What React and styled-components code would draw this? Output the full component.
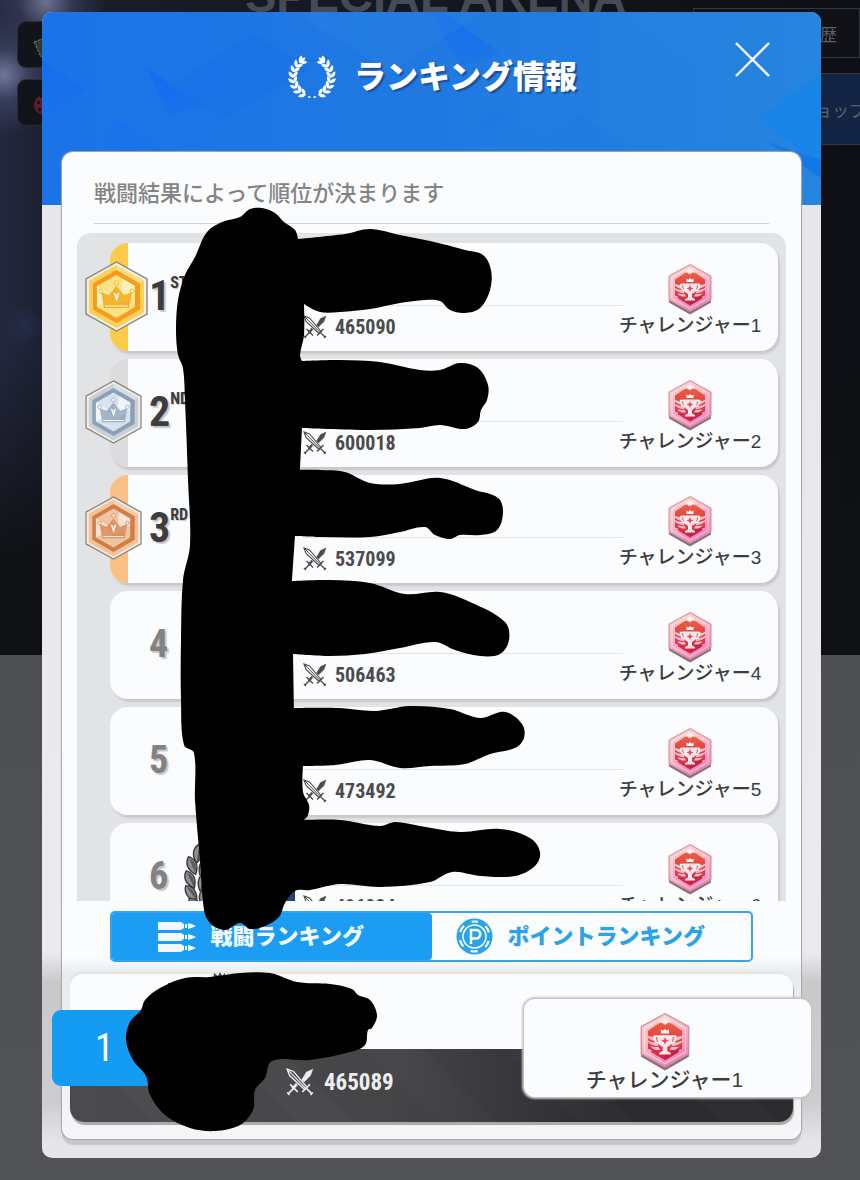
import React, { useState } from "react"
import styled, { createGlobalStyle } from "styled-components"

const GlobalStyle = createGlobalStyle`
  * {
    box-sizing: border-box;
  }
  body {
    margin: 0;
    background: #4b4c4f;
    font-family: "Liberation Sans", "Noto Sans CJK JP", sans-serif;
  }
  h1, p, ol {
    margin: 0;
    padding: 0;
  }
  button {
    border: 0;
    padding: 0;
    background: none;
    font: inherit;
    cursor: pointer;
  }
`

const narrow = `"Liberation Sans Narrow", "Roboto Condensed", "Liberation Sans", sans-serif`

const Page = styled.main`
  position: relative;
  min-height: 100vh;
  padding: 12px 39px 22px 42px;
  overflow: hidden;
  background: linear-gradient(#4a4b4e, #525356);
`

/* dimmed game screen behind the dialog */
const Scene = styled.div`
  position: absolute;
  inset: 0 0 auto;
  height: 655px;
  overflow: hidden;
  background:
    radial-gradient(circle at 4px 75px, #70779a 0, #363c5a 26px, transparent 60px),
    radial-gradient(circle at 46px 2px, #6c7190 0, #30344f 28px, transparent 60px),
    radial-gradient(circle at 24px 325px, #232d49 0, transparent 20px),
    linear-gradient(90deg, #24283f 0, #191d2b 60px, #14171f 50%, #0d0f14 100%);
  &::after {
    content: "";
    position: absolute;
    inset: 350px 0 0;
    background: linear-gradient(transparent, #101115 70%);
  }
`

const SceneTitle = styled.div`
  position: absolute;
  top: -28px;
  left: 245px;
  color: #454a57;
  font-size: 47px;
  line-height: 1;
  font-weight: 700;
  white-space: nowrap;
`

const SceneIcon = styled.div`
  position: absolute;
  left: 17px;
  top: ${({ $top }) => $top}px;
  width: 60px;
  height: 47px;
  border: 1px solid #2a2d38;
  border-radius: 9px;
  background: #12141c;
  svg {
    display: block;
    margin: 8px 0 0 14px;
  }
`

const SceneButton = styled.div`
  position: absolute;
  right: ${({ $right = 0 }) => $right}px;
  top: ${({ $top }) => $top}px;
  width: 167px;
  height: ${({ $height }) => $height}px;
  display: flex;
  align-items: center;
  justify-content: flex-end;
  padding-right: ${({ $pad }) => $pad}px;
  border: 1px solid #33363e;
  background: ${({ $bg }) => $bg};
  color: #5d6069;
  font-size: 17px;
`

const Dialog = styled.section`
  position: relative;
  display: flex;
  flex-direction: column;
  padding: 0 20px 19px;
  border-radius: 10px;
  background: linear-gradient(
    #e6e6e8 0,
    #ebebed 940px,
    #cbc8ca 970px,
    #cfcccf 1090px,
    #e6e5e8 1130px
  );
`

const Pattern = styled.svg`
  position: absolute;
  inset: 0 0 auto;
  width: 100%;
  height: 193px;
  border-radius: 10px 10px 0 0;
`

const Header = styled.header`
  position: relative;
  display: flex;
  align-items: center;
  justify-content: center;
  gap: 18px;
  height: 140px;
  padding: 0 0 10px 2px;
  h1 {
    color: #fff;
    font-size: 32px;
    line-height: 40px;
    font-weight: 900;
    text-shadow: 2px 2px 1px #1d4f9a;
  }
`

const Close = styled.button`
  position: absolute;
  top: 29px;
  right: 30px;
  width: 37px;
  height: 37px;
  svg {
    display: block;
  }
`

const Card = styled.div`
  position: relative;
  display: flex;
  flex-direction: column;
  padding-bottom: 17px;
  border-radius: 11px;
  background: linear-gradient(#fafcfd 0, #fafcfd 805px, #e9ecee 822px, #f4f6f7 100%);
  box-shadow: 0 0 1px 1px #a5a5a8, 0 6px 1px #c9c5c8;
`

const Intro = styled.p`
  margin: 0 32px;
  padding: 26px 0 13px;
  border-bottom: 1px solid #cfd1d2;
  color: #868483;
  font-size: 22px;
  line-height: 32px;
  font-weight: 500;
`

const List = styled.ol`
  display: flex;
  flex-direction: column;
  gap: 8px;
  height: 668px;
  margin: 9px 15px 0;
  padding: 10px 8px 0 33px;
  overflow: hidden;
  list-style: none;
  border-radius: 14px 14px 0 0;
  background: #e2e3e5;
`

const Row = styled.li`
  position: relative;
  flex: none;
  display: grid;
  grid-template-columns: 193px 1fr 155px;
  height: 108px;
  border-radius: 18px;
  background: linear-gradient(90deg, ${({ $strip }) => $strip} 18px, #fafcfd 18px);
  box-shadow: 2px 3px 2px #c9c9cc;
`

const Rank = styled.div`
  display: flex;
  align-items: center;
  height: 106px;
`

const MedalSlot = styled.div`
  flex: none;
  display: flex;
  width: 64px;
  margin-left: -25px;
`

const Place = styled.span`
  color: ${({ $top }) => ($top ? "#3d3d3f" : "#828282")};
  font-family: ${narrow};
  font-size: ${({ $top }) => ($top ? 42 : 38)}px;
  line-height: 48px;
  font-weight: 700;
  text-shadow: 2px 2px 1px #c6c6c8;
`

const Suffix = styled.sup`
  align-self: flex-start;
  padding-top: 30px;
  color: #3d3d3f;
  font-family: ${narrow};
  font-size: 16px;
  line-height: 20px;
  font-weight: 700;
  text-shadow: 1px 1px 1px #c6c6c8;
`

const Wreath = styled.svg`
  position: absolute;
  left: 70px;
  top: 20px;
`

const Info = styled.div`
  display: grid;
  grid-template-rows: 63px 42px;
`

const PlayerName = styled.div`
  border-bottom: 1px solid #e2e4e5;
`

const Score = styled.div`
  display: flex;
  align-items: center;
  gap: ${({ $large }) => ($large ? 10 : 8)}px;
  color: ${({ $large }) => ($large ? "#eeeef0" : "#4b4b4d")};
  font-family: ${narrow};
  font-size: ${({ $large }) => ($large ? 23 : 20)}px;
  font-weight: 700;
`

const Tier = styled.div`
  display: flex;
  flex-direction: column;
  align-items: center;
  padding: 20px 21px 0 0;
  color: #3c3c3e;
  font-size: 19px;
  line-height: 20px;
  font-weight: 500;
  white-space: nowrap;
`

const Tabs = styled.div`
  display: grid;
  grid-template-columns: 1fr 1fr;
  height: 51px;
  margin: 10px 48px 0;
  overflow: hidden;
  border: 2px solid #35a4e9;
  border-radius: 5px;
`

const Tab = styled.button`
  display: flex;
  align-items: center;
  justify-content: center;
  gap: 15px;
  padding-right: 22px;
  border-radius: 0 4px 4px 0;
  background: ${({ $active }) => ($active ? "#1a9df3" : "#fafcfd")};
  color: ${({ $active }) => ($active ? "#f2f8fc" : "#2ba3e8")};
  font-size: 22px;
  line-height: 30px;
  font-weight: 900;
  white-space: nowrap;
`

const Own = styled.section`
  position: relative;
  height: 148px;
  margin: 12px 8px 0;
  padding: 75px 0 0 216px;
  border-radius: 14px;
  background:
    linear-gradient(#fafcfd 75px, transparent 75px),
    repeating-linear-gradient(45deg, transparent 0 60px, #ffffff04 60px 100px),
    linear-gradient(90deg, #4b4b4f 0, #454548 45%, #2c2c2f 75%);
  box-shadow: 1px 3px 1px #a9a9ab, 0 -2px 3px #e2e4e5;
  ${Score} {
    height: 66px;
  }
`

const OwnRank = styled.div`
  position: absolute;
  top: 36px;
  left: -18px;
  display: flex;
  align-items: center;
  justify-content: center;
  width: 105px;
  height: 76px;
  border-radius: 9px 0 0 9px;
  background: #149bf4;
  color: #fff;
  font-family: ${narrow};
  font-size: 38px;
`

const OwnTier = styled(Tier)`
  position: absolute;
  top: 25px;
  right: -18px;
  width: 287px;
  height: 98px;
  padding: 13px 6px 0 0;
  border-radius: 11px;
  background: #fbfcfd;
  box-shadow: 0 0 2px 2px #c6c6c8;
  font-size: 21px;
  line-height: 16px;
`

const Ink = styled.svg`
  position: absolute;
  top: 0;
  left: 0;
  width: 100%;
  height: 100%;
  pointer-events: none;
`

const players = [
  { place: 1, suffix: "ST", score: "465090", medal: "gold", strip: "#fdcb4a" },
  { place: 2, suffix: "ND", score: "600018", medal: "silver", strip: "#dcdcdf" },
  { place: 3, suffix: "RD", score: "537099", medal: "bronze", strip: "#fbc083" },
  { place: 4, score: "506463" },
  { place: 5, score: "473492" },
  { place: 6, score: "496034" },
]

const medals = {
  gold: { outer: "#fbd257", ring: "#f69a20", inner: "#fbe283", crown: "#f5b52f", shine: "#fdf1be" },
  silver: { outer: "#c9d0d8", ring: "#8ba0b5", inner: "#d8e2ec", crown: "#a4b5c8", shine: "#f1f5f9" },
  bronze: { outer: "#f3c19c", ring: "#ce7f45", inner: "#f0c3a2", crown: "#dc9a6c", shine: "#fae3d2" },
}

// a third item marks a sharp corner
const scribbles = [
  [
    [207, 232], [222, 222], [240, 217], [250, 209], [262, 208], [275, 213], [284, 222], [295, 230],
    [298, 239, 1], [345, 234], [370, 229], [400, 235], [430, 241], [465, 250], [483, 255], [491, 270],
    [490, 290], [480, 308], [465, 313], [450, 310], [440, 301], [425, 300], [400, 303], [370, 309],
    [340, 312], [320, 312], [304, 304, 1], [304, 335], [300, 355], [302, 361, 1], [340, 360],
    [380, 362], [420, 370], [440, 370], [460, 363], [478, 368], [488, 385], [487, 400], [481, 410],
    [478, 422], [465, 429], [440, 425], [420, 428], [370, 430], [302, 428, 1], [300, 470, 1],
    [320, 470], [345, 472], [370, 483], [400, 484], [440, 478], [475, 490], [498, 498], [503, 512],
    [497, 530], [480, 535], [460, 535], [450, 539], [435, 535], [425, 527], [400, 532], [370, 537],
    [320, 537], [295, 536, 1], [292, 581, 1], [330, 580], [370, 583], [405, 594], [440, 592],
    [470, 602], [505, 622], [509, 640], [500, 654], [480, 656], [455, 650], [435, 642], [400, 648],
    [365, 654], [330, 656], [293, 654, 1], [294, 708, 1], [340, 708], [375, 711], [410, 706],
    [450, 709], [480, 718], [505, 712], [522, 724], [524, 738], [515, 748], [490, 754], [465, 764],
    [430, 766], [400, 768], [370, 760], [335, 765], [303, 766, 1], [303, 792], [309, 805],
    [308, 815], [304, 820, 1], [340, 820], [380, 826], [395, 822], [420, 826], [460, 832],
    [500, 829], [530, 838], [540, 852], [535, 866], [515, 876], [480, 876], [452, 872], [430, 882],
    [380, 887], [340, 884], [310, 890], [295, 891], [285, 903], [279, 917], [265, 926], [250, 929],
    [240, 923], [225, 930], [210, 923], [204, 910], [200, 860], [195, 800], [194, 753], [184, 745],
    [181, 700], [181, 640], [183, 580], [190, 545], [188, 480], [185, 400], [183, 368], [178, 355],
    [176, 330], [178, 300], [185, 275], [195, 257],
  ],
  [
    [126, 1040], [130, 1022], [141, 1010], [145, 1000], [160, 988], [185, 978], [210, 977],
    [240, 973], [270, 973], [297, 982], [330, 984], [352, 989], [358, 995], [370, 1000], [377, 1015],
    [372, 1028], [368, 1030], [365, 1045], [350, 1052], [310, 1060], [272, 1061], [265, 1078],
    [255, 1090], [253, 1110], [240, 1125], [215, 1131], [190, 1128], [165, 1115], [150, 1095],
    [146, 1076], [133, 1060],
  ],
]

// closed curve through every point
const smooth = (pts) => {
  const n = pts.length
  const at = (i) => pts[(i + n) % n]
  let d = `M${pts[0][0]} ${pts[0][1]}`
  for (let i = 0; i < n; i++) {
    const [a, b, c, e] = [at(i - 1), at(i), at(i + 1), at(i + 2)]
    const len = Math.hypot(c[0] - b[0], c[1] - b[1])
    const t1 = b[2] ? 0 : len / (Math.hypot(c[0] - a[0], c[1] - a[1]) || 1) / 3
    const t2 = c[2] ? 0 : len / (Math.hypot(e[0] - b[0], e[1] - b[1]) || 1) / 3
    d += `C${b[0] + (c[0] - a[0]) * t1} ${b[1] + (c[1] - a[1]) * t1} ${c[0] - (e[0] - b[0]) * t2} ${
      c[1] - (e[1] - b[1]) * t2
    } ${c[0]} ${c[1]}`
  }
  return d + "Z"
}

const Medal = ({ kind }) => {
  const c = medals[kind]
  const gold = kind === "gold"
  return (
    <svg width={gold ? 63 : 57} height={gold ? 71 : 64} viewBox="0 0 63 71" aria-hidden="true">
      <path d="M31.5 1 62 18v35L31.5 70 1 53V18Z" fill="#f1eee6" stroke="#88857f" strokeWidth="1.4" />
      <path d="M31.5 4 59 19.500v32L31.5 67 4 51.500v-32Z" fill={c.outer} />
      <path d="M31.5 4 59 19.500 31.500 36Z" fill={c.shine} opacity=".4" />
      <path d="M31.5 9 55 22.500v26L31.500 62 8 48.500v-26Z" fill={c.ring} />
      <path d="M31.5 14 50 25v21L31.500 57 12 46V25Z" fill={c.inner} />
      <path d="m12 25 19.500 11L12 46ZM38 18l12 7v8L34 40Z" fill={c.shine} />
      <path d="m16 31 8 3 7.500-9 7.500 9 8-3-3 16H19Z" fill={c.crown} />
      <path d="m19 47 25-8v8ZM31.500 25v16l-7.500-6Z" fill={c.ring} opacity=".3" />
      <path d="M20 45h23" stroke={c.shine} strokeWidth="1.2" />
      <circle cx="16" cy="30" r="2" fill={c.shine} stroke={c.crown} />
      <circle cx="47" cy="30" r="2" fill={c.shine} stroke={c.crown} />
      <circle cx="31.5" cy="22" r="2.200" fill={c.shine} stroke={c.crown} />
      <path d="m29 32 2.500 8 2.500-8-1.500 1-1 4-1-4Z" fill="#fff" stroke="#fff" strokeWidth=".6" />
    </svg>
  )
}

const Emblem = ({ size }) => (
  <svg width={size} height={Math.round(size * 1.2)} viewBox="0 0 44 52" aria-hidden="true">
    <defs>
      <linearGradient id="rim" x1="0" y1="0" x2=".5" y2="1">
        <stop offset="0" stopColor="#fbd6cd" />
        <stop offset=".5" stopColor="#f8b9c6" />
        <stop offset="1" stopColor="#f086bd" />
      </linearGradient>
      <linearGradient id="field" x1="0" y1="0" x2="0" y2="1">
        <stop offset="0" stopColor="#ee5c3f" />
        <stop offset="1" stopColor="#d4214c" />
      </linearGradient>
    </defs>
    <path d="M1 14v25l21 12 21-12V14Z" fill="#86707a" />
    <path d="M22 1 43 12.500v24L22 48 1 36.500v-24Z" fill="url(#rim)" stroke="#d58c95" />
    <path d="M22 4 40 14v21L22 45 4 35V14Z" fill="none" stroke="#fff" opacity=".5" />
    <path d="m16 10 3-1 3 2 3-2 3 1 9 6v16l-3 1v2L22 42 10 35v-2l-3-1V16Z" fill="url(#field)" />
    <path d="m17 8 5-3 5 3-5 2Z" fill="#fff1ed" />
    <path d="M22 37 34 29v6L22 42Z" fill="#a81842" opacity=".4" />
    <g fill="#f8bcc6">
      <path d="M3.500 18c3 3 7 3.500 10.500 3.500l1 4C10 25 5 22 3.500 18Z" />
      <path d="M5.500 23.500c2.500 2 6 2.800 9.500 2.800l1.500 3.200c-5 0-9.500-2-11-6Z" />
      <path d="M9 29.500c2 1 4.500 1 7.500.8L18 33c-4 .5-7-.5-9-3.500Z" />
      <path d="M40.500 18c-3 3-7 3.500-10.500 3.500l-1 4c5-.5 10-3.500 11.500-7.500Z" />
      <path d="M38.500 23.500c-2.500 2-6 2.800-9.500 2.800l-1.500 3.200c5 0 9.500-2 11-6Z" />
      <path d="M35 29.500c-2 1-4.500 1-7.500.8L26 33c4 .5 7-.5 9-3.500Z" />
    </g>
    <path d="M16 21h-3.500c0 4 1.500 6 5 6.500M28 21h3.500c0 4-1.500 6-5 6.500" fill="none" stroke="#fff" strokeWidth="1.300" />
    <path d="M15 20h14c0 6-1.500 9-5 10.500V34l3 1.500V37H17v-1.500l3-1.500v-3.500c-3.500-1.500-5-4.500-5-10.500Z" fill="#fde6ea" />
    <path d="m22 21.500 1 2.500 2.500 1-2.500 1-1 2.500-1-2.500-2.500-1 2.500-1Z" fill="#dc4a68" />
    <path d="m18.500 15 2 1.200L22 14.500l1.500 1.700 2-1.200v3.500h-7Z" fill="#fff" />
  </svg>
)

const Swords = ({ size, color = "#4b4b4d" }) => (
  <svg width={size} height={size} viewBox="0 0 24 24" fill="none" stroke={color} aria-hidden="true">
    <path d="m1 1 2 5.500 13 12 2-2L6.500 3Z" strokeWidth="1.100" />
    <path d="m2 2 14.500 15" strokeWidth="1" />
    <path d="m23 1-2 5.500-5.500 5.500-2-2 4-6.500ZM10 14.500l-3.500 4-1.500-1.500 3.500-4Z" fill={color} strokeWidth=".4" />
    <path d="m14 20.500 6.500-6.500M17.500 17.500l4.500 4.500M3.500 14l6.500 6.500M6.500 17.500 2 22" strokeWidth="1.400" />
    <path d="m21 23 2-2M1 21l2 2" strokeWidth="1.400" />
  </svg>
)

const leafAngles = [22, 39, 56, 73, 90, 107, 124, 141]

const Laurel = () => (
  <svg width="48" height="46" viewBox="0 0 48 46" fill="#fff" aria-hidden="true">
    {[1, -1].map((side) => (
      <g key={side} transform={side === 1 ? undefined : "translate(48 0) scale(-1 1)"}>
        {leafAngles.map((deg) => {
          const rad = (deg * Math.PI) / 180
          const x = 24 - Math.sin(rad) * 19
          const y = 23 + Math.cos(rad) * 19
          const turn = (Math.atan2(-Math.cos(rad), Math.sin(rad)) * 180) / Math.PI
          return (
            <g key={deg} transform={`translate(${x} ${y}) rotate(${turn})`}>
              <path transform="rotate(-38)" d="M0 1C-3-2-2-5 0-7 2-5 2-2 0 1Z" />
              <path transform="rotate(38)" d="M0 1C-2-2-2-5 0-7 3-5 2-2 0 1Z" />
            </g>
          )
        })}
        <path transform="translate(12 8) rotate(50)" d="M0 1C-2-2-2-5 0-7 2-5 2-2 0 1Z" />
      </g>
    ))}
    <path d="M20 43h2.500M25.500 43H28" stroke="#fff" strokeWidth="1.500" />
  </svg>
)

const leaves = [
  [23, 10, 8], [17, 22, -22], [15, 36, -25], [16, 50, -35], [20, 62, -40],
  [29, 24, 20], [28, 38, 18], [29, 53, 12],
]

const GreyWreath = () => (
  <Wreath width="60" height="88" viewBox="0 0 60 88" aria-hidden="true">
    {leaves.map(([x, y, r]) => (
      <g key={`${x}-${y}`} transform={`translate(${x - 5} ${y}) rotate(${r})`}>
        <path d="M0 10C-7 2-5-5 0-9 6-4 6 3 0 10Z" fill="#8e8f91" stroke="#38383a" strokeWidth="1.400" />
        <path d="M0 9V-7C4-3 4 3 0 9Z" fill="#58595b" />
      </g>
    ))}
  </Wreath>
)

const Bullets = () => (
  <svg width="38" height="32" viewBox="0 0 38 32" fill="#f2f8fc" aria-hidden="true">
    {[1, 12, 23].map((y) => (
      <g key={y} transform={`translate(0 ${y})`}>
        <path d="M0 0h23l3 2v4l-3 2H0ZM27 2h2v4h-2ZM30 1c4 1 6 2 8 3-2 1-4 2-8 3Z" />
      </g>
    ))}
  </svg>
)

const Chip = () => (
  <svg width="37" height="37" viewBox="0 0 37 37" aria-hidden="true">
    <circle cx="18.5" cy="18.5" r="18" fill="#2ba3e8" />
    <circle cx="18.5" cy="18.5" r="15" fill="none" stroke="#fff" strokeWidth="2.200" strokeDasharray="7 8.708" strokeDashoffset="3.500" transform="rotate(-90 18.500 18.500)" />
    <circle cx="18.5" cy="18.5" r="11.500" fill="none" stroke="#fff" strokeWidth="1.500" />
    <path d="M15 26V12h5a4.200 4.200 0 0 1 0 8.500h-5" fill="none" stroke="#fff" strokeWidth="2.500" />
  </svg>
)

const HeaderPattern = () => (
  <Pattern viewBox="0 0 779 193" preserveAspectRatio="none" aria-hidden="true">
    <defs>
      <linearGradient id="sky" x1="0" y1="0" x2="1" y2="0">
        <stop offset="0" stopColor="#1b73e8" />
        <stop offset=".5" stopColor="#2079e1" />
        <stop offset="1" stopColor="#2685df" />
      </linearGradient>
      <linearGradient id="fold" x1=".6" y1="0" x2=".3" y2="1">
        <stop offset="0" stopColor="#126af3" stopOpacity=".8" />
        <stop offset="1" stopColor="#1c75e8" stopOpacity="0" />
      </linearGradient>
    </defs>
    <path fill="url(#sky)" d="M0 0h779v193H0Z" />
    <g fill="url(#fold)">
      <path d="M0 48 45 78 0 112ZM105 56l52 36-30 14ZM72 106l52 34H60ZM0 160l22 16v17H0Z" />
      <path d="m388 0 15 0 55 42-40 12ZM455 96l42 32-8 12h-98ZM540 102l52 38H480ZM350 125l32 15h-25Z" />
    </g>
    <path d="m210 22 60 34-90 52-50-35Z" fill="#176de9" opacity=".35" />
    <path d="M779 62 718 106l61 50Z" fill="#1685e8" opacity=".8" />
    <path d="m725 130 54 36v-18Z" fill="#1377e8" />
    <path d="m250 0 100 60 90-60ZM570 0l80 50 80-50Z" fill="#2a83e4" opacity=".4" />
  </Pattern>
)

const TierBadge = ({ level, size }) => (
  <>
    <Emblem size={size} />
    <span>チャレンジャー{level}</span>
  </>
)

const PlayerRow = ({ place, suffix, score, medal, strip = "#fafcfd" }) => (
  <Row $strip={strip}>
    <Rank>
      <MedalSlot>{medal && <Medal kind={medal} />}</MedalSlot>
      <Place $top={Boolean(medal)}>{place}</Place>
      {suffix && <Suffix>{suffix}</Suffix>}
    </Rank>
    <Info>
      <PlayerName />
      <Score>
        <Swords size={24} />
        {score}
      </Score>
    </Info>
    <Tier>
      <TierBadge level={place} size={44} />
    </Tier>
    {place === 6 && <GreyWreath />}
  </Row>
)

const App = () => {
  const [tab, setTab] = useState("battle")

  return (
    <Page>
      <GlobalStyle />
      <Scene aria-hidden="true">
        <SceneTitle>SPECIAL ARENA</SceneTitle>
        <SceneIcon $top={21}>
          <svg width="20" height="30" viewBox="0 0 20 30">
            <path d="m2 12 8-3 8 14-9 4Z" fill="#34362f" stroke="#77776a" strokeDasharray="3 1" />
          </svg>
        </SceneIcon>
        <SceneIcon $top={79}>
          <svg width="20" height="30" viewBox="0 0 20 30">
            <circle cx="12" cy="17" r="10" fill="#641b26" />
            <path d="M8 6h5v4H8ZM5 13h3v3H5ZM6 20h3v3H6Z" fill="#10131a" />
          </svg>
        </SceneIcon>
        <SceneButton $top={8} $height={50} $pad={22} $bg="#101217">歴</SceneButton>
        <SceneButton $top={73} $height={72} $pad={0} $right={-7} $bg="#142444">ョップ</SceneButton>
      </Scene>
      <Dialog>
        <HeaderPattern />
        <Header>
          <Laurel />
          <h1>ランキング情報</h1>
          <Close aria-label="閉じる">
            <svg width="37" height="37" viewBox="0 0 37 37" aria-hidden="true">
              <path d="m2 2 33 33M35 2 2 35" stroke="#fff" strokeWidth="2.400" />
            </svg>
          </Close>
        </Header>
        <Card>
          <Intro>戦闘結果によって順位が決まります</Intro>
          <List>
            {players.map((player) => (
              <PlayerRow key={player.place} {...player} />
            ))}
          </List>
          <Tabs>
            <Tab $active={tab === "battle"} onClick={() => setTab("battle")}>
              <Bullets />
              戦闘ランキング
            </Tab>
            <Tab $active={tab === "point"} onClick={() => setTab("point")}>
              <Chip />
              ポイントランキング
            </Tab>
          </Tabs>
          <Own>
            <Score $large>
              <Swords size={28} color="#eeeef0" />
              465089
            </Score>
            <OwnRank>1</OwnRank>
            <OwnTier>
              <TierBadge level={1} size={50} />
            </OwnTier>
          </Own>
        </Card>
        <Ink viewBox="42 12 779 1146" preserveAspectRatio="xMinYMin meet" aria-hidden="true">
          <path d="M284 889h11v12h-11Z" fill="#29436f" />
          <path d="m213 980 1-7 4 3 2-4 2 4 3-3v8ZM168 983h5l12-2h6l-8 5h-14Z" fill="#444" />
          {scribbles.map((points, i) => (
            <path key={i} d={smooth(points)} />
          ))}
        </Ink>
      </Dialog>
    </Page>
  )
}

export default App
